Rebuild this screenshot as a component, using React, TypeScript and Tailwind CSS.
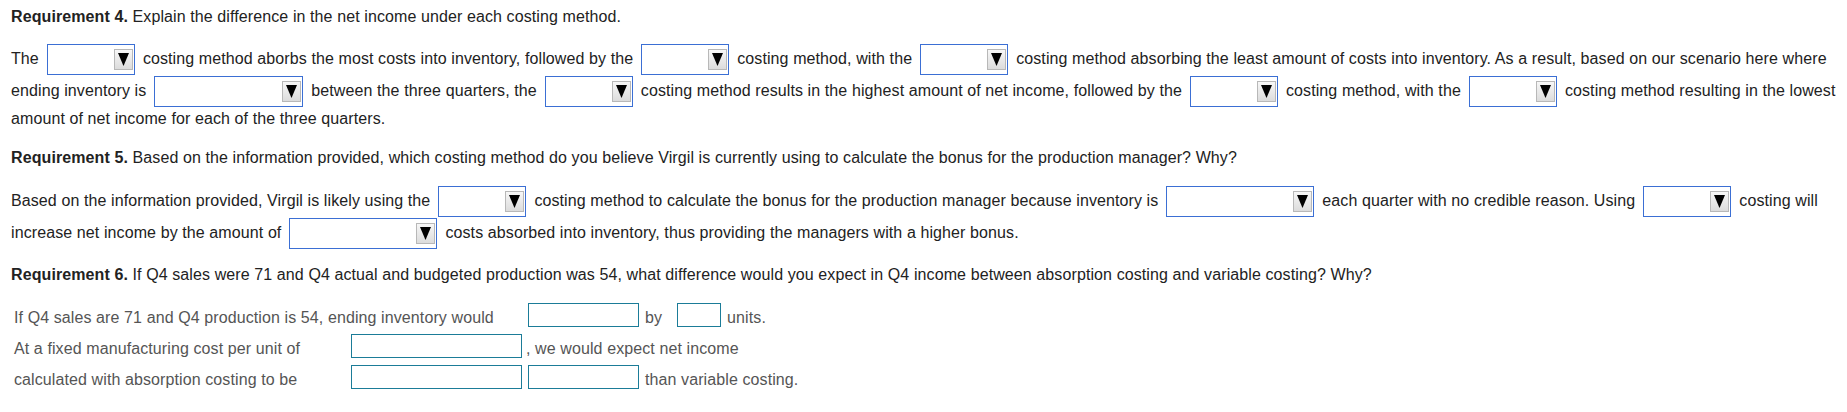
import React from "react";

// dropdown select as drawn in the homework player
function Drop({ w }: { w: string }) {
  return (
    <span className={`flex h-[31px] ${w} shrink-0 items-center justify-end border border-[#3b6fd4] bg-white pr-px`}>
      <span className="flex h-[21px] w-[19px] items-center justify-center border border-[#b8b8b8] bg-gradient-to-b from-[#f7f7f7] to-[#dcdcdc]">
        <svg width="11" height="13" viewBox="0 0 11 13">
          <polygon points="0,0 11,0 5.5,13" fill="#000" />
        </svg>
      </span>
    </span>
  );
}

function Box({ w = "w-full" }: { w?: string }) {
  return <span className={`mb-[5px] block h-[24px] ${w} shrink-0 border border-[#1b7c98] bg-white`} />;
}

function Row({ children }: { children: React.ReactNode }) {
  return <div className="flex h-[32px] items-center gap-2 whitespace-nowrap">{children}</div>;
}

function Heading({ num, text, className = "" }: { num: string; text: string; className?: string }) {
  return (
    <div className={`h-[20px] whitespace-nowrap leading-5 ${className}`}>
      <span className="font-bold">Requirement {num}.</span> {text}
    </div>
  );
}

export default function App() {
  return (
    <div
      className="h-[412px] w-[1847px] overflow-hidden bg-white pl-[11px] pt-[7px] text-[16px] tracking-[0.1px] text-[#222]"
      style={{ fontFamily: '"Liberation Sans", Arial, sans-serif' }}
    >
      <Heading num="4" text="Explain the difference in the net income under each costing method." />

      <div className="mt-[16px]">
        <Row>
          <span>The</span>
          <Drop w="w-[88px]" />
          <span>costing method aborbs the most costs into inventory, followed by the</span>
          <Drop w="w-[88px]" />
          <span>costing method, with the</span>
          <Drop w="w-[88px]" />
          <span>costing method absorbing the least amount of costs into inventory. As a result, based on our scenario here where</span>
        </Row>
        <Row>
          <span>ending inventory is</span>
          <Drop w="w-[149px]" />
          <span>between the three quarters, the</span>
          <Drop w="w-[88px]" />
          <span>costing method results in the highest amount of net income, followed by the</span>
          <Drop w="w-[88px]" />
          <span>costing method, with the</span>
          <Drop w="w-[88px]" />
          <span>costing method resulting in the lowest</span>
        </Row>
        <div className="mt-[2px] h-[20px] leading-5">amount of net income for each of the three quarters.</div>
      </div>

      <Heading
        num="5"
        className="mt-[19px]"
        text="Based on the information provided, which costing method do you believe Virgil is currently using to calculate the bonus for the production manager? Why?"
      />

      <div className="mt-[17px]">
        <Row>
          <span>Based on the information provided, Virgil is likely using the</span>
          <Drop w="w-[88px]" />
          <span>costing method to calculate the bonus for the production manager because inventory is</span>
          <Drop w="w-[148px]" />
          <span>each quarter with no credible reason. Using</span>
          <Drop w="w-[88px]" />
          <span>costing will</span>
        </Row>
        <Row>
          <span>increase net income by the amount of</span>
          <Drop w="w-[148px]" />
          <span>costs absorbed into inventory, thus providing the managers with a higher bonus.</span>
        </Row>
      </div>

      <Heading
        num="6"
        className="mt-[16px]"
        text="If Q4 sales were 71 and Q4 actual and budgeted production was 54, what difference would you expect in Q4 income between absorption costing and variable costing? Why?"
      />

      <div className="mt-[17px] grid grid-cols-[331px_171px_111px_auto] gap-x-[6px] pl-[3px] text-[#555]">
        <div className="col-span-2 flex h-[31px] items-center whitespace-nowrap">
          If Q4 sales are 71 and Q4 production is 54, ending inventory would
        </div>
        <div className="flex h-[31px] items-center">
          <Box />
        </div>
        <div className="flex h-[31px] items-center whitespace-nowrap">
          <span>by</span>
          <span className="ml-[15px] flex items-center">
            <Box w="w-[44px]" />
          </span>
          <span className="ml-[6px]">units.</span>
        </div>

        <div className="flex h-[31px] items-center whitespace-nowrap">At a fixed manufacturing cost per unit of</div>
        <div className="flex h-[31px] items-center">
          <Box />
        </div>
        <div className="col-span-2 -ml-[2px] flex h-[31px] items-center whitespace-nowrap">, we would expect net income</div>

        <div className="flex h-[31px] items-center whitespace-nowrap">calculated with absorption costing to be</div>
        <div className="flex h-[31px] items-center">
          <Box />
        </div>
        <div className="flex h-[31px] items-center">
          <Box />
        </div>
        <div className="flex h-[31px] items-center whitespace-nowrap">than variable costing.</div>
      </div>
    </div>
  );
}
